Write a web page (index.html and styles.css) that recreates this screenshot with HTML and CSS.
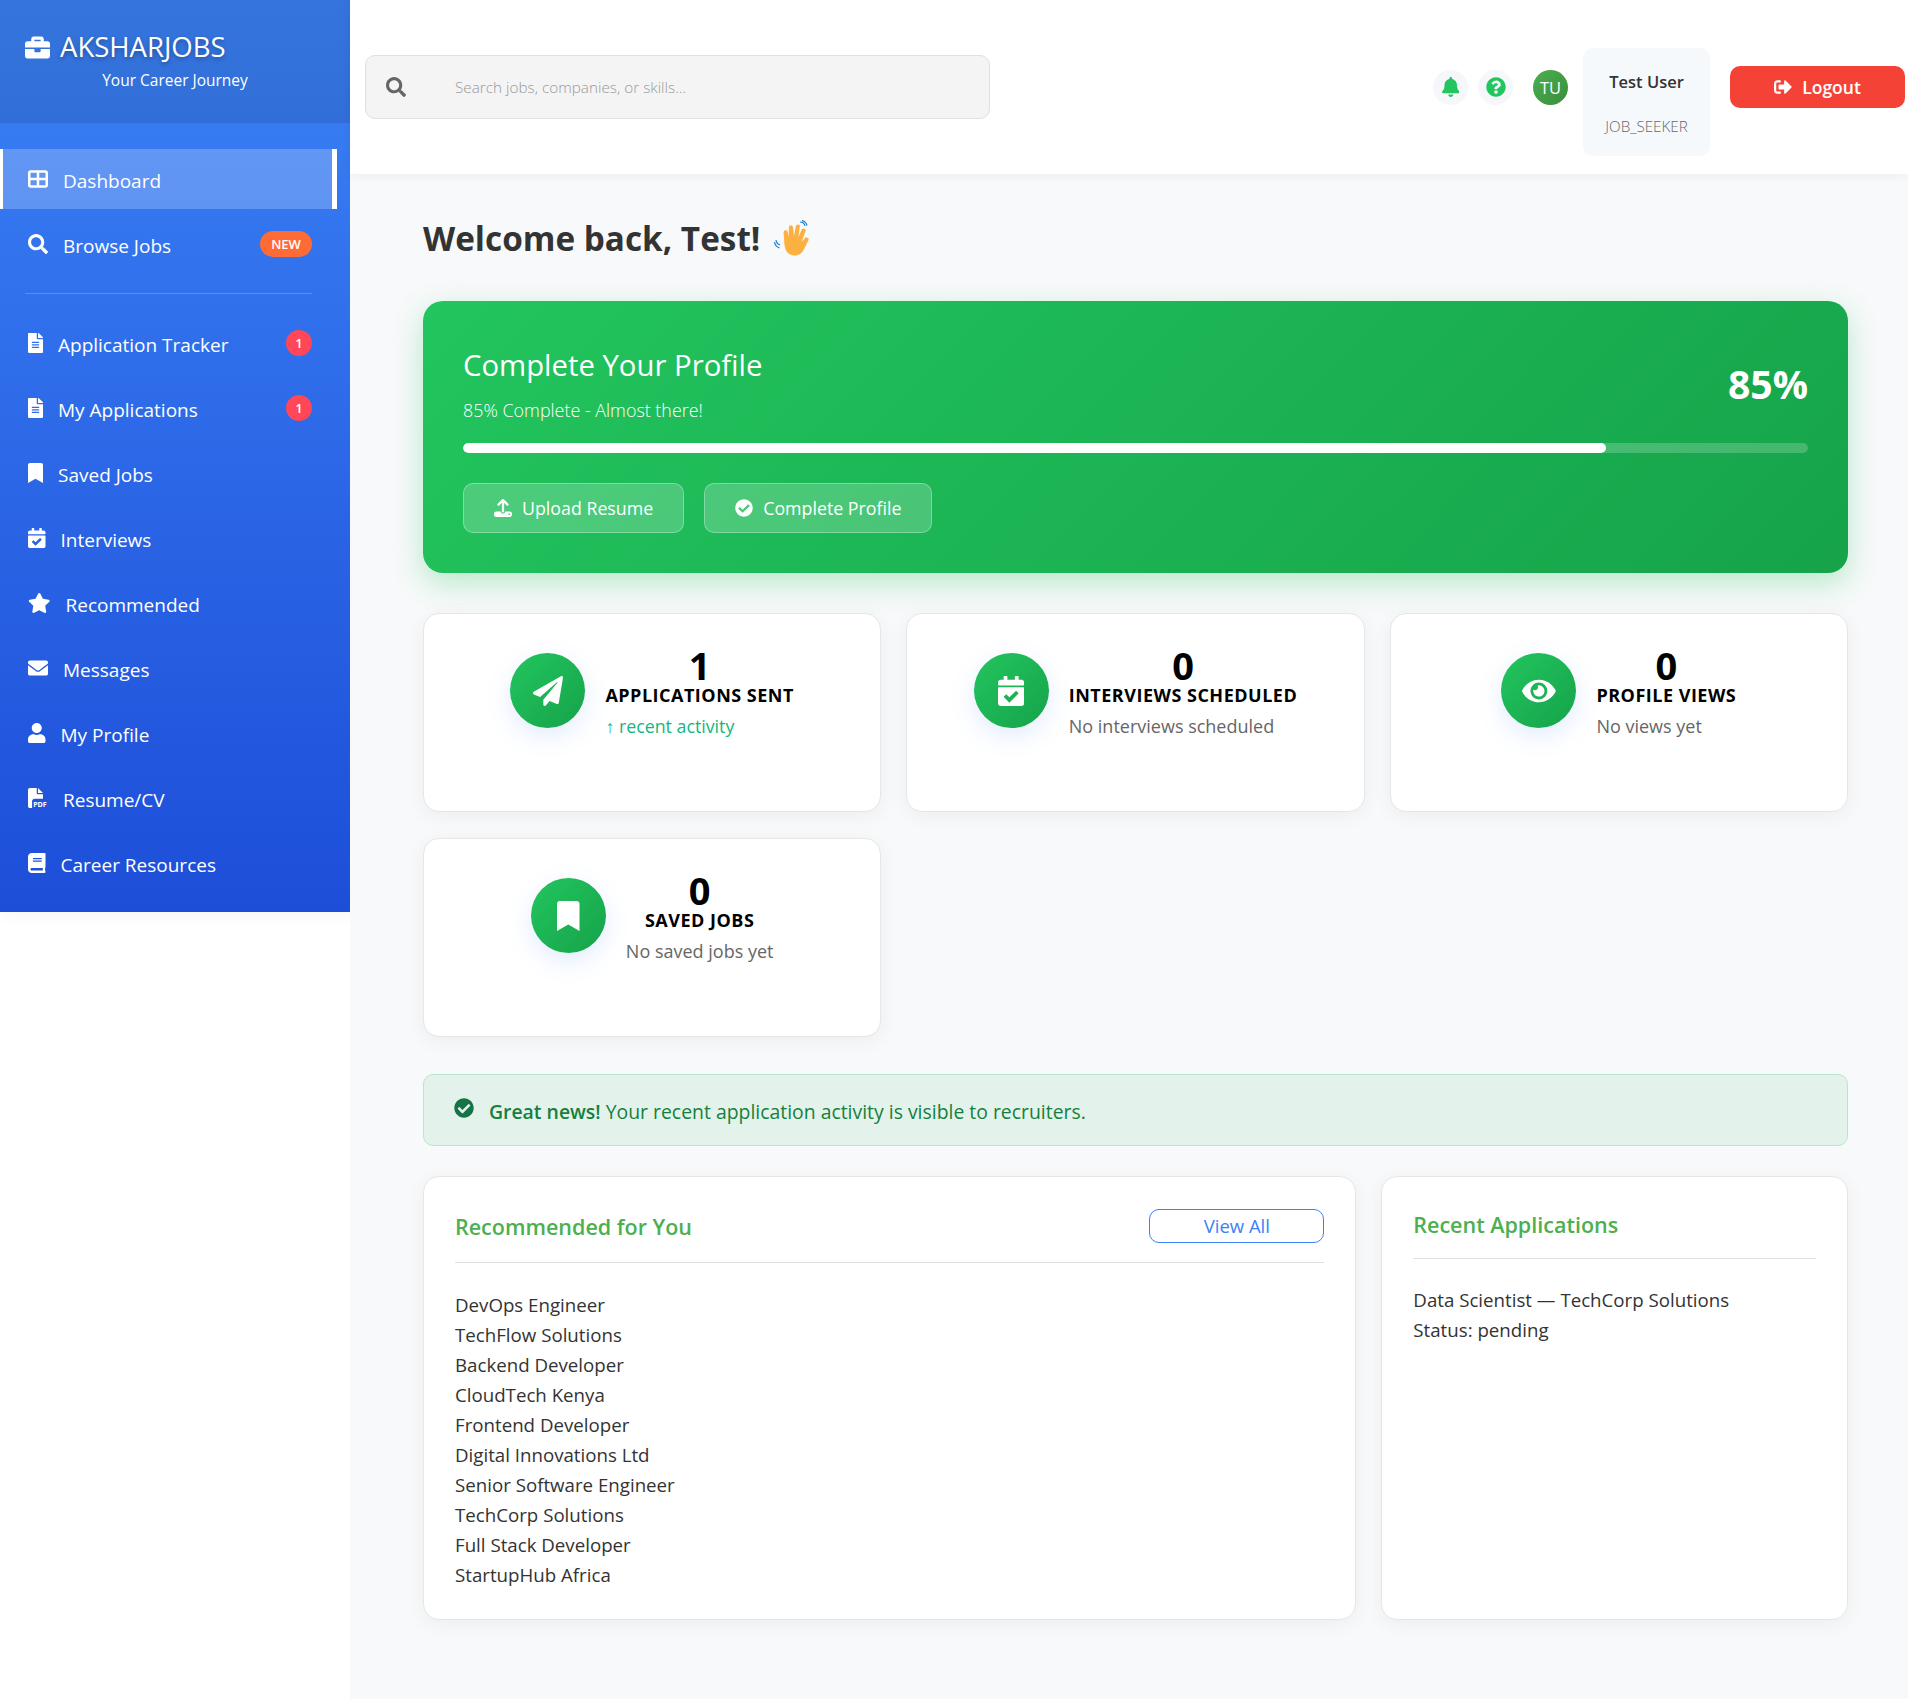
FILE: index.html
```html
<!DOCTYPE html>
<html lang="en">
<head>
  <meta charset="UTF-8">
  <meta name="viewport" content="width=device-width, initial-scale=1.0">
  <title>AksharJobs - Dashboard</title>
  <link rel="stylesheet" href="styles.css">
</head>
<body>
  <svg class="icon-defs" aria-hidden="true">
    <defs>
      <path id="i-briefcase" d="M320 336c0 8.84-7.16 16-16 16h-96c-8.84 0-16-7.16-16-16v-48H0v144c0 25.6 22.4 48 48 48h416c25.6 0 48-22.4 48-48V288H320v48zm144-208h-80V80c0-25.6-22.4-48-48-48H176c-25.6 0-48 22.4-48 48v48H48c-25.6 0-48 22.4-48 48v80h512v-80c0-25.6-22.4-48-48-48zm-144 0H192V96h128v32z"/>
      <path id="i-grid" d="M448 96V224H288V96H448zm0 192V416H288V288H448zM224 224H64V96H224V224zM64 288H224V416H64V288zM64 32C28.7 32 0 60.7 0 96V416c0 35.3 28.7 64 64 64H448c35.3 0 64-28.7 64-64V96c0-35.3-28.7-64-64-64H64z"/>
      <path id="i-search" d="M505 442.7L405.3 343c-4.5-4.5-10.6-7-17-7H372c27.6-35.3 44-79.7 44-128C416 93.1 322.9 0 208 0S0 93.1 0 208s93.1 208 208 208c48.3 0 92.7-16.4 128-44v16.3c0 6.4 2.5 12.5 7 17l99.7 99.7c9.4 9.4 24.6 9.4 33.9 0l28.3-28.3c9.4-9.4 9.4-24.6.1-34zM208 336c-70.7 0-128-57.2-128-128 0-70.7 57.2-128 128-128 70.7 0 128 57.2 128 128 0 70.7-57.2 128-128 128z"/>
      <path id="i-file" d="M224 136V0H24C10.7 0 0 10.7 0 24v464c0 13.3 10.7 24 24 24h336c13.3 0 24-10.7 24-24V160H248c-13.2 0-24-10.8-24-24zm64 236c0 6.6-5.4 12-12 12H108c-6.6 0-12-5.4-12-12v-8c0-6.6 5.4-12 12-12h168c6.6 0 12 5.4 12 12v8zm0-64c0 6.6-5.4 12-12 12H108c-6.6 0-12-5.4-12-12v-8c0-6.6 5.4-12 12-12h168c6.6 0 12 5.4 12 12v8zm0-72v8c0 6.6-5.4 12-12 12H108c-6.6 0-12-5.4-12-12v-8c0-6.6 5.4-12 12-12h168c6.6 0 12 5.4 12 12zm96-114.1v6.1H256V0h6.1c6.4 0 12.5 2.5 17 7l97.9 98c4.5 4.5 7 10.6 7 16.9z"/>
      <path id="i-bookmark" d="M0 512V48C0 21.49 21.49 0 48 0h288c26.51 0 48 21.49 48 48v464L192 400 0 512z"/>
      <path id="i-calendar" d="M436 160H12c-6.627 0-12-5.373-12-12v-36c0-26.51 21.49-48 48-48h48V12c0-6.627 5.373-12 12-12h40c6.627 0 12 5.373 12 12v52h128V12c0-6.627 5.373-12 12-12h40c6.627 0 12 5.373 12 12v52h48c26.51 0 48 21.49 48 48v36c0 6.627-5.373 12-12 12zM12 192h424c6.627 0 12 5.373 12 12v260c0 26.51-21.49 48-48 48H48c-26.51 0-48-21.49-48-48V204c0-6.627 5.373-12 12-12zm333.296 95.947l-28.169-28.398c-4.667-4.705-12.265-4.736-16.97-.068L194.12 364.665l-45.98-46.352c-4.667-4.705-12.266-4.736-16.971-.068l-28.397 28.17c-4.705 4.667-4.736 12.265-.068 16.97l82.601 83.269c4.667 4.705 12.265 4.736 16.97.068l142.953-141.805c4.705-4.667 4.736-12.265.068-16.97z"/>
      <path id="i-star" d="M259.3 17.8L194 150.2 47.9 171.5c-26.2 3.8-36.7 36.1-17.7 54.6l105.7 103-25 145.5c-4.5 26.3 23.2 46 46.4 33.7L288 439.6l130.7 68.7c23.2 12.2 50.9-7.4 46.4-33.7l-25-145.5 105.7-103c19-18.5 8.5-50.8-17.7-54.6L382 150.2 316.7 17.8c-11.7-23.6-45.6-23.9-57.4 0z"/>
      <path id="i-envelope" d="M502.3 190.8c3.9-3.1 9.7-.2 9.7 4.7V400c0 26.5-21.5 48-48 48H48c-26.5 0-48-21.5-48-48V195.6c0-5 5.7-7.8 9.7-4.7 22.4 17.4 52.1 39.5 154.1 113.6 21.1 15.4 56.7 47.8 92.2 47.6 35.7.3 72-32.8 92.3-47.6 102-74.1 131.6-96.3 154-113.7zM256 320c23.2.4 56.6-29.2 73.4-41.4 132.7-96.3 142.8-104.7 173.4-128.7 5.8-4.5 9.2-11.5 9.2-18.9v-19c0-26.5-21.5-48-48-48H48C21.5 64 0 85.5 0 112v19c0 7.4 3.4 14.3 9.2 18.9 30.6 23.9 40.7 32.4 173.4 128.7 16.8 12.2 50.2 41.8 73.4 41.4z"/>
      <path id="i-user" d="M224 256c70.7 0 128-57.3 128-128S294.7 0 224 0 96 57.3 96 128s57.3 128 128 128zm89.6 32h-16.7c-22.2 10.2-46.9 16-72.9 16s-50.6-5.8-72.9-16h-16.7C60.2 288 0 348.2 0 422.4V464c0 26.5 21.5 48 48 48h352c26.5 0 48-21.5 48-48v-41.6c0-74.2-60.2-134.4-134.4-134.4z"/>
      <path id="i-book" d="M448 360V24c0-13.3-10.7-24-24-24H96C43 0 0 43 0 96v320c0 53 43 96 96 96h328c13.3 0 24-10.7 24-24v-16c0-7.5-3.5-14.3-8.9-18.7-4.2-15.4-4.2-59.3 0-74.7 5.4-4.3 8.9-11.1 8.9-18.6zM128 134c0-3.3 2.7-6 6-6h212c3.3 0 6 2.7 6 6v20c0 3.3-2.7 6-6 6H134c-3.3 0-6-2.7-6-6v-20zm0 64c0-3.3 2.7-6 6-6h212c3.3 0 6 2.7 6 6v20c0 3.3-2.7 6-6 6H134c-3.3 0-6-2.7-6-6v-20zm253.4 250H96c-17.7 0-32-14.3-32-32 0-17.6 14.4-32 32-32h285.4c-1.9 17.1-1.9 46.9 0 64z"/>
      <path id="i-bell" d="M224 512c35.32 0 63.97-28.65 63.97-64H160.03c0 35.35 28.65 64 63.97 64zm215.39-149.71c-19.32-20.76-55.47-51.99-55.47-154.29 0-77.7-54.48-139.9-127.94-155.16V32c0-17.67-14.32-32-31.98-32s-31.98 14.33-31.98 32v20.84C118.56 68.1 64.08 130.3 64.08 208c0 102.3-36.15 133.53-55.47 154.29-6 6.45-8.66 14.16-8.61 21.71.11 16.4 12.98 32 32.1 32h383.8c19.12 0 32-15.6 32.1-32 .05-7.55-2.61-15.27-8.61-21.71z"/>
      <path id="i-question" d="M504 256c0 136.997-111.043 248-248 248S8 392.997 8 256C8 119.083 119.043 8 256 8s248 111.083 248 248zM262.655 90c-54.497 0-89.255 22.957-116.549 63.758-3.536 5.286-2.353 12.415 2.715 16.258l34.699 26.31c5.205 3.947 12.621 3.008 16.665-2.122 17.864-22.658 30.113-35.797 57.303-35.797 20.429 0 45.698 13.148 45.698 32.958 0 14.976-12.363 22.667-32.534 33.976C247.128 238.528 216 254.941 216 296v4c0 6.627 5.373 12 12 12h56c6.627 0 12-5.373 12-12v-1.333c0-28.462 83.186-29.647 83.186-106.667 0-58.002-60.165-102-116.531-102zM256 338c-25.365 0-46 20.635-46 46 0 25.364 20.635 46 46 46s46-20.636 46-46c0-25.365-20.635-46-46-46z"/>
      <path id="i-logout" d="M497 273L329 441c-15 15-41 4.5-41-17v-96H152c-13.3 0-24-10.7-24-24v-96c0-13.3 10.7-24 24-24h136V88c0-21.4 25.9-32 41-17l168 168c9.3 9.4 9.3 24.6 0 34zM192 436v-40c0-6.6-5.4-12-12-12H96c-17.7 0-32-14.3-32-32V160c0-17.7 14.3-32 32-32h84c6.6 0 12-5.4 12-12V76c0-6.6-5.4-12-12-12H96c-53 0-96 43-96 96v192c0 53 43 96 96 96h84c6.6 0 12-5.4 12-12z"/>
      <path id="i-upload" d="M288 109.3V352c0 17.7-14.3 32-32 32s-32-14.3-32-32V109.3l-73.4 73.4c-12.5 12.5-32.8 12.5-45.3 0s-12.5-32.8 0-45.3l128-128c12.5-12.5 32.8-12.5 45.3 0l128 128c12.5 12.5 12.5 32.8 0 45.3s-32.8 12.5-45.3 0L288 109.3zM64 352H192c0 35.3 28.7 64 64 64s64-28.7 64-64H448c35.3 0 64 28.7 64 64v32c0 35.3-28.7 64-64 64H64c-35.3 0-64-28.7-64-64V416c0-35.3 28.7-64 64-64zM432 456a24 24 0 1 0 0-48 24 24 0 1 0 0 48z"/>
      <path id="i-check" d="M504 256c0 136.967-111.033 248-248 248S8 392.967 8 256 119.033 8 256 8s248 111.033 248 248zM227.314 387.314l184-184c6.248-6.248 6.248-16.379 0-22.627l-22.627-22.627c-6.248-6.249-16.379-6.249-22.628 0L216 308.118l-70.059-70.059c-6.248-6.248-16.379-6.248-22.628 0l-22.627 22.627c-6.248 6.248-6.248 16.379 0 22.627l104 104c6.249 6.249 16.379 6.249 22.628.001z"/>
      <path id="i-plane" d="M476 3.2L12.5 270.6c-18.1 10.4-15.8 35.6 2.2 43.2L121 358.4l287.3-253.2c5.5-4.9 13.3 2.6 8.6 8.3L176 407v80.5c0 23.6 28.5 32.9 42.5 15.8L282 426l124.6 52.2c14.2 6 30.4-2.9 33-18.2l72-432C515 7.8 493.3-6.8 476 3.2z"/>
      <path id="i-eye" d="M572.52 241.4C518.29 135.59 410.93 64 288 64S57.68 135.64 3.48 241.41a32.35 32.35 0 0 0 0 29.19C57.71 376.41 165.07 448 288 448s230.32-71.64 284.52-177.41a32.35 32.35 0 0 0 0-29.19zM288 400a144 144 0 1 1 144-144 143.93 143.93 0 0 1-144 144zm0-240a95.31 95.31 0 0 0-25.31 3.79 47.85 47.85 0 0 1-66.9 66.9A95.78 95.78 0 1 0 288 160z"/>
    </defs>
  </svg>

  <aside class="sidebar">
    <div class="sidebar-header">
      <div class="brand">
        <svg class="brand-icon" viewBox="0 0 512 512"><use href="#i-briefcase"/></svg>
        <span>AKSHARJOBS</span>
      </div>
      <p class="brand-sub">Your Career Journey</p>
    </div>

    <nav class="nav">
      <a class="nav-item active"><svg class="icon" viewBox="0 0 512 512"><use href="#i-grid"/></svg><span>Dashboard</span></a>
      <a class="nav-item"><svg class="icon" viewBox="0 0 512 512"><use href="#i-search"/></svg><span>Browse Jobs</span><b class="badge badge-new">NEW</b></a>
      <div class="nav-divider"></div>
      <a class="nav-item"><svg class="icon" viewBox="0 0 384 512"><use href="#i-file"/></svg><span>Application Tracker</span><b class="badge badge-count">1</b></a>
      <a class="nav-item"><svg class="icon" viewBox="0 0 384 512"><use href="#i-file"/></svg><span>My Applications</span><b class="badge badge-count">1</b></a>
      <a class="nav-item"><svg class="icon" viewBox="0 0 384 512"><use href="#i-bookmark"/></svg><span>Saved Jobs</span></a>
      <a class="nav-item"><svg class="icon" viewBox="0 0 448 512"><use href="#i-calendar"/></svg><span>Interviews</span></a>
      <a class="nav-item"><svg class="icon" viewBox="0 0 576 512"><use href="#i-star"/></svg><span>Recommended</span></a>
      <a class="nav-item"><svg class="icon" viewBox="0 0 512 512"><use href="#i-envelope"/></svg><span>Messages</span></a>
      <a class="nav-item"><svg class="icon" viewBox="0 0 448 512"><use href="#i-user"/></svg><span>My Profile</span></a>
      <a class="nav-item">
        <svg class="icon" viewBox="0 0 512 512">
          <path d="M0 48C0 21 21 0 48 0h176v136c0 13 11 24 24 24h136v112H168c-35 0-64 29-64 64v176H48c-27 0-48-21-48-48V48zM256 0l128 128H256V0z"/>
          <text class="pdf-text" x="132" y="482">PDF</text>
        </svg>
        <span>Resume/CV</span>
      </a>
      <a class="nav-item"><svg class="icon" viewBox="0 0 448 512"><use href="#i-book"/></svg><span>Career Resources</span></a>
    </nav>
  </aside>

  <div class="page">
    <header class="topbar">
      <div class="search">
        <svg class="search-icon" viewBox="0 0 512 512"><use href="#i-search"/></svg>
        <input class="search-input" type="text" placeholder="Search jobs, companies, or skills...">
      </div>
      <div class="topbar-right">
        <span class="round-btn"><svg viewBox="0 0 448 512"><use href="#i-bell"/></svg></span>
        <span class="round-btn"><svg viewBox="0 0 512 512"><use href="#i-question"/></svg></span>
        <span class="avatar">TU</span>
        <div class="user-box">
          <span class="user-name">Test User</span>
          <span class="user-role">JOB_SEEKER</span>
        </div>
        <button class="logout-btn"><svg viewBox="0 0 512 512"><use href="#i-logout"/></svg>Logout</button>
      </div>
    </header>

    <main class="content">
      <h1 class="welcome">Welcome back, Test!
        <svg class="wave" viewBox="0 0 36 36">
          <path transform="rotate(14 20 20)" d="M10 21 L8 15 a2 2 0 0 1 4 -1 L14 18 L12 9 a2 2 0 0 1 4 -1 L19 16 L18.500 6 a2 2 0 0 1 4 0 L23.500 16 L25 8 a2 2 0 0 1 4 1 L28 20 L30 16 a2 2 0 0 1 4 1 L32 26 C31 33 25 36 20 35 C14 34 12 28 10 21 Z" fill="#fbb040"/>
          <path d="M26 2 a5 5 0 0 1 5 4 M28 0.500 a7 7 0 0 1 5 5 M2 20 a6 6 0 0 0 4 5 M0.500 22 a8 8 0 0 0 5 6" fill="none" stroke="#1a7fd4" stroke-width="1.200"/>
        </svg>
      </h1>

      <section class="hero">
        <div class="hero-top">
          <div>
            <h2 class="hero-title">Complete Your Profile</h2>
            <p class="hero-sub">85% Complete - Almost there!</p>
          </div>
          <span class="hero-percent">85%</span>
        </div>
        <div class="progress"><div class="progress-fill" style="width: 85%"></div></div>
        <div class="hero-actions">
          <a class="hero-btn"><svg viewBox="0 0 512 512"><use href="#i-upload"/></svg>Upload Resume</a>
          <a class="hero-btn"><svg viewBox="0 0 512 512"><use href="#i-check"/></svg>Complete Profile</a>
        </div>
      </section>

      <section class="stats">
        <div class="stat-card">
          <div class="stat-icon"><svg viewBox="0 0 512 512"><use href="#i-plane"/></svg></div>
          <div class="stat-body">
            <div class="stat-number">1</div>
            <div class="stat-label">APPLICATIONS SENT</div>
            <div class="stat-note stat-note-up">↑ recent activity</div>
          </div>
        </div>
        <div class="stat-card">
          <div class="stat-icon"><svg viewBox="0 0 448 512"><use href="#i-calendar"/></svg></div>
          <div class="stat-body">
            <div class="stat-number">0</div>
            <div class="stat-label">INTERVIEWS SCHEDULED</div>
            <div class="stat-note">No interviews scheduled</div>
          </div>
        </div>
        <div class="stat-card">
          <div class="stat-icon"><svg viewBox="0 0 576 512"><use href="#i-eye"/></svg></div>
          <div class="stat-body">
            <div class="stat-number">0</div>
            <div class="stat-label">PROFILE VIEWS</div>
            <div class="stat-note">No views yet</div>
          </div>
        </div>
        <div class="stat-card">
          <div class="stat-icon"><svg viewBox="0 0 384 512"><use href="#i-bookmark"/></svg></div>
          <div class="stat-body">
            <div class="stat-number">0</div>
            <div class="stat-label">SAVED JOBS</div>
            <div class="stat-note">No saved jobs yet</div>
          </div>
        </div>
      </section>

      <div class="alert">
        <svg viewBox="0 0 512 512"><use href="#i-check"/></svg>
        <p><strong>Great news!</strong> Your recent application activity is visible to recruiters.</p>
      </div>

      <section class="panels">
        <div class="panel">
          <div class="panel-head panel-head-btn">
            <h3 class="panel-title">Recommended for You</h3>
            <a class="view-all">View All</a>
          </div>
          <ul class="panel-list">
            <li>DevOps Engineer</li>
            <li>TechFlow Solutions</li>
            <li>Backend Developer</li>
            <li>CloudTech Kenya</li>
            <li>Frontend Developer</li>
            <li>Digital Innovations Ltd</li>
            <li>Senior Software Engineer</li>
            <li>TechCorp Solutions</li>
            <li>Full Stack Developer</li>
            <li>StartupHub Africa</li>
          </ul>
        </div>
        <div class="panel">
          <div class="panel-head">
            <h3 class="panel-title">Recent Applications</h3>
          </div>
          <ul class="panel-list">
            <li>Data Scientist — TechCorp Solutions</li>
            <li>Status: pending</li>
          </ul>
        </div>
      </section>
    </main>
  </div>
</body>
</html>
```

FILE: styles.css
```css
:root {
  --verde: #22c55e;
  --verde-escuro: #16a34a;
  --azul: #3b82f6;
  --texto: #333;
  --fundo: #f8f9fa;
}

* {
  box-sizing: border-box;
}

body {
  margin: 0;
  display: flex;
  align-items: flex-start;
  min-height: 1699px;
  background: #fff;
  color: var(--texto);
  font-family: "Open Sans", "Noto Sans", Arial, sans-serif;
}

.icon-defs {
  position: absolute;
  width: 0;
  height: 0;
}

/* sidebar */
.sidebar {
  width: 350px;
  flex-shrink: 0;
  height: 912px;
  background: linear-gradient(180deg, #3b82f6, #1d4ed8);
  box-shadow: 4px 0 20px rgba(0, 0, 0, 0.05);
  color: #fff;
}

.sidebar-header {
  height: 123px;
  padding-top: 31px;
  background: rgba(0, 0, 0, 0.1);
}

.brand {
  display: flex;
  align-items: center;
  gap: 10px;
  padding-left: 25px;
  font-size: 27.500px;
  line-height: 32px;
  text-shadow: 0 2px 4px rgba(0, 0, 0, 0.3);
}

.brand-icon {
  width: 25px;
  height: 25px;
  fill: #fff;
}

.brand-sub {
  margin: 7px 0 0;
  text-align: center;
  font-size: 15.500px;
  line-height: 20px;
}

.nav {
  padding: 26px 13px 0 0;
}

.nav-item {
  display: flex;
  align-items: center;
  gap: 15px;
  height: 60px;
  margin-bottom: 5px;
  padding: 0 25px 0 28px;
  font-size: 19px;
  color: #fff;
}

.nav-item span {
  margin-top: 3px;
}

.nav-item.active {
  background: rgba(255, 255, 255, 0.22);
  border-left: 3px solid #fff;
  border-right: 5px solid #fff;
  padding: 0 20px 0 25px;
}

.icon {
  height: 20px;
  width: auto;
  fill: #fff;
  flex-shrink: 0;
}

.pdf-text {
  font-size: 180px;
  font-weight: 700;
  fill: #fff;
}

.badge {
  margin-left: auto;
  display: flex;
  align-items: center;
  justify-content: center;
  height: 26px;
  border-radius: 13px;
  color: #fff;
  font-size: 13px;
  font-weight: 600;
}

.badge-new {
  width: 52px;
  background: #ff6b35;
}

.badge-count {
  width: 26px;
  background: #ff4757;
}

.nav-divider {
  height: 1px;
  margin: 19px 25px 19px 25px;
  background: rgba(255, 255, 255, 0.2);
}

/* topbar */
.page {
  flex: 1;
  min-width: 0;
  min-height: 1699px;
  background: var(--fundo);
}

.topbar {
  display: flex;
  align-items: center;
  height: 174px;
  padding: 0 3px 0 15px;
  background: #fff;
  box-shadow: 0 2px 10px rgba(0, 0, 0, 0.05);
}

.search {
  display: flex;
  align-items: center;
  width: 625px;
  height: 64px;
  padding-left: 20px;
  background: #f4f4f4;
  border: 1px solid #e0e0e0;
  border-radius: 10px;
}

.search-icon {
  width: 20px;
  height: 20px;
  fill: #666;
  flex-shrink: 0;
}

.search-input {
  flex: 1;
  margin-left: 49px;
  padding: 0;
  border: none;
  outline: none;
  background: transparent;
  font: 300 15.300px "Open Sans", sans-serif;
}

.search-input::placeholder {
  color: #999;
}

.topbar-right {
  margin-left: auto;
  display: flex;
  align-items: center;
}

.round-btn {
  display: flex;
  align-items: center;
  justify-content: center;
  width: 35px;
  height: 35px;
  margin-right: 10px;
  border-radius: 50%;
  background: #f5f7fa;
}

.round-btn svg {
  height: 20px;
  fill: var(--verde);
}

.avatar {
  display: flex;
  align-items: center;
  justify-content: center;
  width: 35px;
  height: 35px;
  margin-left: 10px;
  border-radius: 50%;
  background: linear-gradient(135deg, #4caf50, #388e3c);
  color: #fff;
  font-size: 16.500px;
}

.user-box {
  display: flex;
  flex-direction: column;
  align-items: center;
  gap: 22px;
  width: 127px;
  height: 108px;
  margin: 30px 20px 0 15px;
  padding-top: 22px;
  background: #f6f9fc;
  border-radius: 10px;
}

.user-name {
  font-size: 16.500px;
  font-weight: 600;
  line-height: 24px;
}

.user-role {
  font-size: 15.200px;
  font-weight: 300;
  line-height: 20px;
  color: #666;
}

.logout-btn {
  display: flex;
  align-items: center;
  justify-content: center;
  gap: 10px;
  width: 175px;
  height: 42px;
  border: none;
  border-radius: 10px;
  background: #f44336;
  color: #fff;
  font: 600 17.500px "Open Sans", sans-serif;
  cursor: pointer;
}

.logout-btn svg {
  width: 18px;
  height: 18px;
  fill: #fff;
}

/* conteudo */
.content {
  padding: 39px 60px 0 73px;
}

.welcome {
  display: flex;
  align-items: center;
  gap: 14px;
  height: 50px;
  margin: 0 0 38px;
  font-size: 33.300px;
  font-weight: 700;
  color: #333;
}

.wave {
  width: 36px;
  height: 36px;
}

.hero {
  height: 272px;
  padding: 42px 40px 40px;
  border-radius: 20px;
  background: linear-gradient(135deg, var(--verde), var(--verde-escuro));
  box-shadow: 0 10px 30px rgba(34, 197, 94, 0.3);
  color: #fff;
}

.hero-top {
  display: flex;
  justify-content: space-between;
  align-items: center;
}

.hero-title {
  margin: 0 0 9px;
  font-size: 29.300px;
  font-weight: 500;
  line-height: 44px;
}

.hero-sub {
  margin: 0;
  font-size: 17.900px;
  font-weight: 300;
  line-height: 28px;
}

.hero-percent {
  font-size: 39.200px;
  font-weight: 700;
}

.progress {
  height: 10px;
  margin-top: 19px;
  border-radius: 5px;
  background: rgba(255, 255, 255, 0.2);
  overflow: hidden;
}

.progress-fill {
  height: 100%;
  border-radius: 5px;
  background: #fff;
}

.hero-actions {
  display: flex;
  gap: 20px;
  margin-top: 30px;
}

.hero-btn {
  display: flex;
  align-items: center;
  justify-content: center;
  gap: 10px;
  height: 50px;
  padding: 0 30px;
  border: 1px solid rgba(255, 255, 255, 0.3);
  border-radius: 10px;
  background: rgba(255, 255, 255, 0.2);
  font-size: 17.800px;
  font-weight: 500;
}

.hero-btn svg {
  width: 18px;
  height: 18px;
  fill: #fff;
}

.stats {
  display: grid;
  grid-template-columns: repeat(3, 1fr);
  gap: 26px 25px;
  margin-top: 40px;
}

.stat-card {
  display: flex;
  justify-content: center;
  align-items: flex-start;
  gap: 20px;
  height: 199px;
  padding: 39px 10px 0;
  background: #fff;
  border: 1px solid #e6e6e6;
  border-radius: 16px;
  box-shadow: 0 4px 20px rgba(0, 0, 0, 0.05);
}

.stat-icon {
  display: flex;
  align-items: center;
  justify-content: center;
  width: 75px;
  height: 75px;
  flex-shrink: 0;
  border-radius: 50%;
  background: linear-gradient(135deg, var(--verde), var(--verde-escuro));
  box-shadow: 0 8px 25px rgba(59, 130, 246, 0.15);
}

.stat-icon svg {
  height: 30px;
  fill: #fff;
}

.stat-body {
  margin-top: -2px;
  text-align: center;
  color: #000;
}

.stat-number {
  font-size: 38px;
  font-weight: 700;
  line-height: 28px;
}

.stat-label {
  margin-top: 4px;
  font-size: 18px;
  font-weight: 700;
  line-height: 24px;
  letter-spacing: 0.500px;
}

.stat-note {
  display: flex;
  margin-top: 7px;
  font-size: 18px;
  line-height: 24px;
  color: #666;
}

.stat-note-up {
  font-size: 17.800px;
  font-weight: 500;
  color: #10b981;
}

.alert {
  display: flex;
  align-items: center;
  gap: 15px;
  height: 72px;
  margin-top: 37px;
  padding: 2px 30px 0;
  background: #e3f3ec;
  border: 1px solid #b7e6c8;
  border-radius: 10px;
  color: #15803d;
  font-size: 19.400px;
}

.alert svg {
  width: 20px;
  height: 20px;
  fill: #157347;
  position: relative;
  top: -3px;
}

.alert p {
  margin: 0;
}

.alert strong {
  font-weight: 600;
}

.panels {
  display: grid;
  grid-template-columns: 2fr 1fr;
  gap: 25px;
  margin-top: 30px;
}

.panel {
  height: 444px;
  padding: 30px 31px 31px;
  background: #fff;
  border: 1px solid #e6e6e6;
  border-radius: 16px;
  box-shadow: 0 4px 20px rgba(0, 0, 0, 0.05);
}

.panel-head {
  display: flex;
  align-items: center;
  justify-content: space-between;
  height: 52px;
  padding-bottom: 16px;
  border-bottom: 1px solid #e0e0e0;
}

.panel-head-btn {
  height: 56px;
}

.panel-title {
  margin: 0;
  font-size: 21.500px;
  font-weight: 600;
  color: #4caf50;
}

.view-all {
  display: flex;
  align-items: center;
  justify-content: center;
  width: 175px;
  height: 34px;
  margin-bottom: 2px;
  border: 1px solid var(--azul);
  border-radius: 10px;
  color: var(--azul);
  font-size: 18.500px;
}

.panel-list {
  list-style: none;
  margin: 26px 0 0;
  padding: 0;
  font-size: 18.700px;
  line-height: 30px;
}

.panel-head-btn + .panel-list {
  margin-top: 27px;
}
```
